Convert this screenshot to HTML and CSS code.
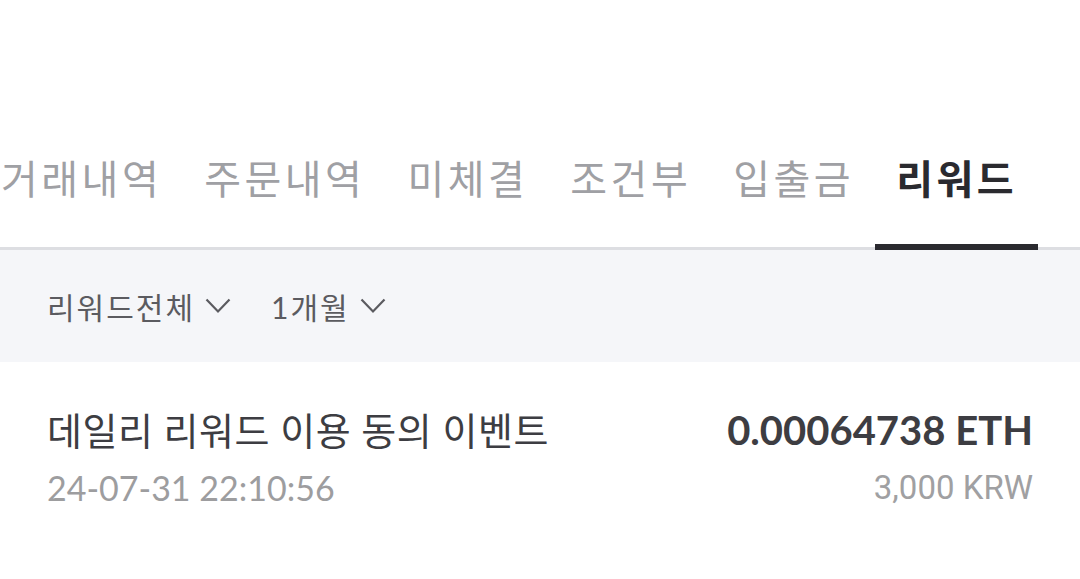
FILE: index.html
```html
<!DOCTYPE html>
<html lang="ko">
<head>
    <meta charset="utf-8">
    <title>리워드 내역</title>
    <link rel="stylesheet" href="styles.css">
</head>
<body>
    <nav class="tabs">
        <a class="tab">거래내역</a>
        <a class="tab">주문내역</a>
        <a class="tab">미체결</a>
        <a class="tab">조건부</a>
        <a class="tab">입출금</a>
        <a class="tab active">리워드</a>
    </nav>

    <div class="filters">
        <button class="filter">리워드전체
            <svg viewBox="0 0 26 16" width="26" height="16"><polyline points="1.5,1.5 13,13.5 24.5,1.5" /></svg>
        </button>
        <button class="filter">1개월
            <svg viewBox="0 0 26 16" width="26" height="16"><polyline points="1.5,1.5 13,13.5 24.5,1.5" /></svg>
        </button>
    </div>

    <ul class="list">
        <li class="item">
            <div class="item-left">
                <div class="item-title">데일리 리워드 이용 동의 이벤트</div>
                <div class="item-date">24-07-31 22:10:56</div>
            </div>
            <div class="item-right">
                <div class="item-amount">0.00064738 ETH</div>
                <div class="item-krw">3,000 KRW</div>
            </div>
        </li>
    </ul>
</body>
</html>
```

FILE: styles.css
```css
body {
    margin: 0;
    background-color: #fff;
    font-family: Lato, "Noto Sans CJK KR", sans-serif;
    color: #333;
    overflow: hidden;
}

.tabs {
    display: flex;
    margin-top: 147px;
    margin-left: -20px;
    border-bottom: 3px solid #dddee2;
}

.tab {
    position: relative;
    padding: 0 21px 36px 21px;
    font-size: 40px;
    line-height: 64px;
    letter-spacing: 3.5px;
    color: #9fa0a4;
    white-space: nowrap;
}

.tab.active {
    color: #2a2a2f;
    font-weight: 700;
}

.tab.active::after {
    content: "";
    position: absolute;
    left: 0;
    right: 0;
    bottom: -3px;
    height: 6px;
    background-color: #2a2a2f;
}

.filters {
    display: flex;
    align-items: center;
    gap: 40px;
    height: 112px;
    padding: 0 47px;
    background-color: #f5f6f9;
}

.filter {
    display: flex;
    align-items: center;
    gap: 10px;
    padding: 0;
    border: none;
    background: none;
    font-family: inherit;
    font-size: 30px;
    letter-spacing: 2px;
    color: #5b5b60;
}

.filter svg {
    fill: none;
    stroke: #5b5b60;
    stroke-width: 2.2;
}

.list {
    list-style-type: none;
    margin: 0;
    padding: 0;
}

.item {
    display: flex;
    justify-content: space-between;
    padding: 40px 47px 0;
}

.item-title {
    font-size: 38px;
    line-height: 56px;
    letter-spacing: 0.5px;
    color: #3d3d42;
}

.item-date {
    font-size: 34px;
    line-height: 60px;
    color: #9d9d9f;
}

.item-right {
    text-align: right;
}

.item-amount {
    font-size: 40px;
    font-weight: 700;
    line-height: 56px;
    color: #3d3d42;
}

.item-krw {
    font-family: Roboto, sans-serif;
    font-size: 33px;
    line-height: 60px;
    color: #a0a0a2;
}
```
